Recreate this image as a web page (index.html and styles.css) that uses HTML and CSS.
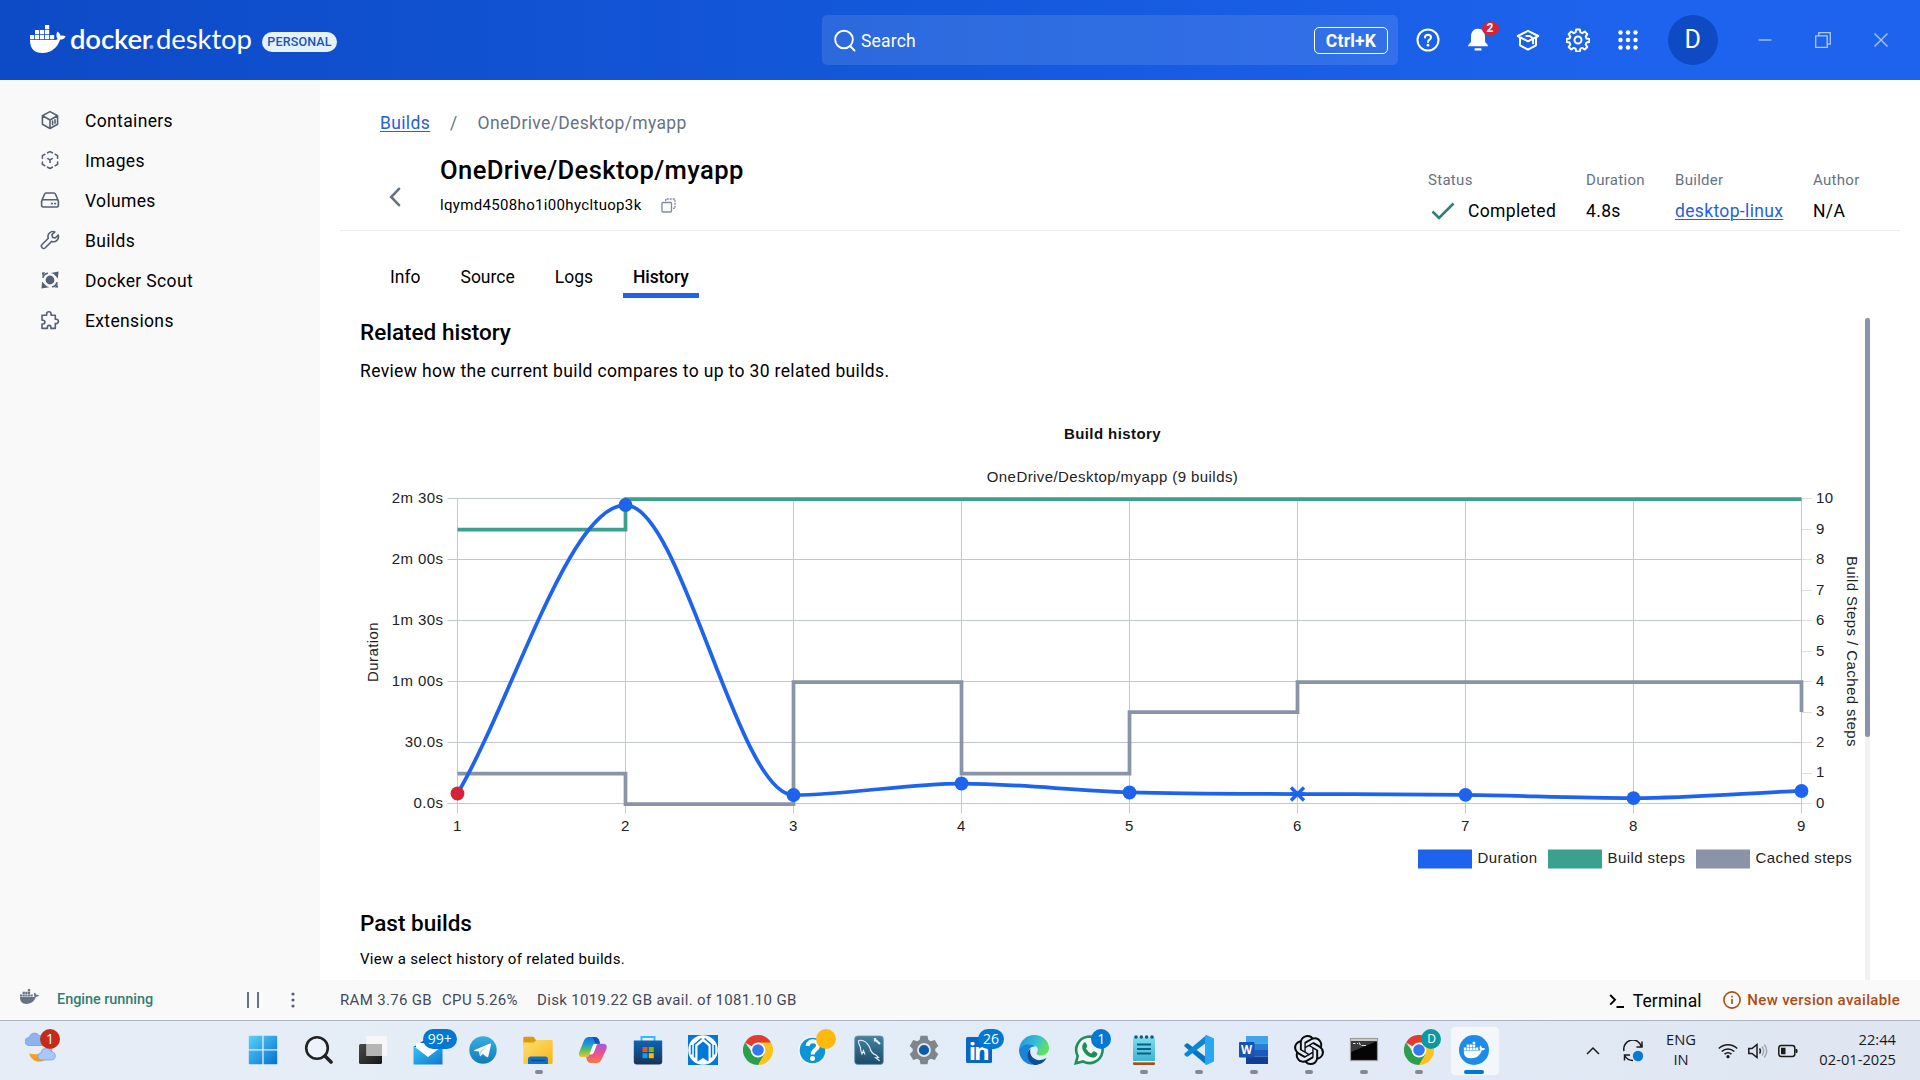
FILE: index.html
```
<!DOCTYPE html>
<html lang="en">
<head>
<meta charset="utf-8">
<title>Docker Desktop</title>
<link rel="stylesheet" href="styles.css">
</head>
<body>
<svg class="defs" width="0" height="0" aria-hidden="true">
  <defs>
    <symbol id="whale" viewBox="0 0 36 28">
      <path d="M15 0h4.200v4.200h-4.200zM5 5h4.200v4.200H5zM10 5h4.200v4.200H10zM15 5h4.200v4.200h-4.200zM0 10h4.200v4.200H0zM5 10h4.200v4.200H5zM10 10h4.200v4.200H10zM15 10h4.200v4.200h-4.200zM20 10h4.200v4.200h-4.200z"/>
      <path d="M0 15h24.300c1.400 0 2.500-.2 3.400-.7-1.600-2.300-1.700-5.300-.3-7.800 1.800 1.100 2.900 2.600 3.200 4.200 1.800-.4 3.700-.1 5.100.8-.9 2-2.800 3.100-5.500 3.100C27.300 23 21.200 28 12.500 28 4.300 28 0 23.800 0 15z"/>
    </symbol>
    <symbol id="chrome" viewBox="0 0 30 30">
      <path fill="#e33b2e" d="M15 15 2 7.500a15 15 0 0 1 26 0z"/>
      <path fill="#fcc31e" d="M28 7.500A15 15 0 0 1 15 30l0-10 5-5-5-7.500z"/>
      <path fill="#2b9f4b" d="M2 7.500A15 15 0 0 0 15 30l6.500-11.300L15 20l-6-3z"/>
      <circle cx="15" cy="15" r="7.400" fill="#fff"/><circle cx="15" cy="15" r="5.800" fill="#3478ee"/>
    </symbol>
    <linearGradient id="gWin" x1="0" y1="0" x2="1" y2="1"><stop offset="0" stop-color="#57d2fb"/><stop offset="1" stop-color="#0670cd"/></linearGradient>
    <linearGradient id="gFolder" x1="0" y1="0" x2="1" y2="1"><stop offset="0" stop-color="#ffdf72"/><stop offset="1" stop-color="#f8b619"/></linearGradient>
    <linearGradient id="gMail" x1="0" y1="0" x2="1" y2="1"><stop offset="0" stop-color="#32c6f4"/><stop offset="1" stop-color="#1376cf"/></linearGradient>
    <linearGradient id="gStore" x1="0" y1="0" x2="0" y2="1"><stop offset="0" stop-color="#0c66b4"/><stop offset="1" stop-color="#1b3257"/></linearGradient>
    <linearGradient id="gTele" x1="0" y1="0" x2="0" y2="1"><stop offset="0" stop-color="#37aee2"/><stop offset="1" stop-color="#127bb8"/></linearGradient>
    <linearGradient id="gCopA" x1="0" y1="0" x2="0" y2="1"><stop offset="0" stop-color="#1a6fe0"/><stop offset=".35" stop-color="#1b9ad8"/><stop offset=".65" stop-color="#5fbf5a"/><stop offset="1" stop-color="#f4c32a"/></linearGradient>
    <linearGradient id="gCopB" x1="0" y1="0" x2="0" y2="1"><stop offset="0" stop-color="#a35be6"/><stop offset=".5" stop-color="#ea5090"/><stop offset="1" stop-color="#fa7a3c"/></linearGradient>
    <linearGradient id="gSql" x1="0" y1="0" x2="0" y2="1"><stop offset="0" stop-color="#4482a2"/><stop offset="1" stop-color="#1d4b67"/></linearGradient>
    <linearGradient id="gEdge" x1="0" y1="0" x2="1" y2=".4"><stop offset="0" stop-color="#1593d8"/><stop offset=".6" stop-color="#35bfd8"/><stop offset="1" stop-color="#62df60"/></linearGradient>
    <linearGradient id="gNote" x1="0" y1="0" x2="0" y2="1"><stop offset="0" stop-color="#7ddcee"/><stop offset="1" stop-color="#41b4d2"/></linearGradient>
    <linearGradient id="gMoon" x1="0" y1="0" x2="1" y2="1"><stop offset="0" stop-color="#f9b62c"/><stop offset="1" stop-color="#ef8b1d"/></linearGradient>
    <linearGradient id="gDark" x1="0" y1="0" x2="1" y2="1"><stop offset="0" stop-color="#4a4a4a"/><stop offset="1" stop-color="#161616"/></linearGradient>
  </defs>
</svg>

<header class="topbar">
  <div class="brand">
    <svg class="brand-whale" width="36" height="28"><use href="#whale"/></svg>
    <svg class="brand-name" width="188" height="44" viewBox="0 0 188 44">
      <text x="0" y="31" class="brand-strong" textLength="82">docker</text>
      <circle cx="81.500" cy="29" r="2" fill="#8db0f0"/>
      <text x="86" y="31" class="brand-light" textLength="96">desktop</text>
    </svg>
    <span class="plan">PERSONAL</span>
  </div>
  <div class="search">
    <svg width="22" height="23" viewBox="0 0 22 23" fill="none" stroke="#fff" stroke-width="1.900" stroke-linecap="round"><circle cx="10" cy="10.500" r="8.800"/><path d="m16 17 4.500 4.500"/></svg>
    <span class="search-text">Search</span>
    <kbd class="shortcut">Ctrl+K</kbd>
  </div>
  <nav class="tools">
    <span class="tool"><svg width="24" height="24" viewBox="0 0 24 24" fill="none" stroke="#fff" stroke-width="2"><circle cx="12" cy="12" r="10.500"/><path d="M9 9.600C9 7.800 10.300 6.800 12 6.800s3 1 3 2.600c0 2.200-3 2.300-3 4.600" stroke-linecap="round"/><circle cx="12" cy="17.200" r="1.400" fill="#fff" stroke="none"/></svg></span>
    <span class="tool"><svg width="24" height="24" viewBox="0 0 24 24" fill="#fff"><path d="M12 .8c4.600 0 7 3.500 7 7.600v5.200c0 1.500 3 2.600 3 4.600H2c0-2 3-3.100 3-4.600V8.400C5 4.300 7.400.8 12 .8zM8.600 20.300h6.800v2.300H8.600z"/></svg><b class="tool-badge">2</b></span>
    <span class="tool"><svg width="24" height="24" viewBox="0 0 24 24" fill="none" stroke="#fff" stroke-width="2" stroke-linejoin="round"><path d="M12 2.800 22.200 8 12 13.300 1.800 8zM4 9.500v7.800l8 4.400 8-4.400V9.500M9.500 8h4.300l3.300 2.400v5.800"/></svg></span>
    <span class="tool"><svg width="24" height="24" viewBox="0 0 24 24" fill="none" stroke="#fff" stroke-width="2" stroke-linejoin="round"><circle cx="12" cy="12" r="3.500"/><path d="M10.200 1.500h3.600l.6 2.900 1.900.8 2.500-1.700 2.500 2.600-1.600 2.500.7 1.800 3 .6v3l-3 .6-.7 1.900 1.600 2.500-2.500 2.500-2.500-1.600-1.900.7-.6 2.900h-3.600l-.6-2.900-1.900-.7-2.500 1.600-2.500-2.500 1.600-2.500-.7-1.900-3-.6v-3l3-.6.7-1.800-1.600-2.500 2.500-2.600 2.500 1.700 1.900-.8z"/></svg></span>
    <span class="tool"><svg width="20" height="20" viewBox="0 0 20 20" fill="#fff"><circle cx="2.500" cy="2.500" r="2.200"/><circle cx="10" cy="2.500" r="2.200"/><circle cx="17.500" cy="2.500" r="2.200"/><circle cx="2.500" cy="10" r="2.200"/><circle cx="10" cy="10" r="2.200"/><circle cx="17.500" cy="10" r="2.200"/><circle cx="2.500" cy="17.500" r="2.200"/><circle cx="10" cy="17.500" r="2.200"/><circle cx="17.500" cy="17.500" r="2.200"/></svg></span>
  </nav>
  <span class="avatar">D</span>
  <div class="window-buttons">
    <svg width="16" height="16" viewBox="0 0 16 16"><path d="M1.500 8h13"/></svg>
    <svg width="16" height="16" viewBox="0 0 16 16"><path d="M.7 3.800h11.500v11.500H.7zM3.800 3.800V.7h11.500v11.500h-3.100"/></svg>
    <svg width="16" height="16" viewBox="0 0 16 16"><path d="m1.500 1.500 13 13m0-13-13 13"/></svg>
  </div>
</header>

<div class="workspace">
  <aside class="sidebar">
    <a class="nav-item"><svg class="nav-icon" viewBox="0 0 20 20"><path d="M10 1.600 17.600 5.700v8.600L10 18.500 2.400 14.300V5.700zM2.600 5.800 10 10l7.400-4.200M10 10v8.300M12.600 11v3.600M15 9.800v3.500"/></svg>Containers</a>
    <a class="nav-item"><svg class="nav-icon" viewBox="0 0 20 20"><path d="M7.600 2.800 10 1.600l2.400 1.200M15.200 4.300l2.400 1.300v2.600M17.600 12v2.400l-2.400 1.300M12.400 17.200 10 18.500l-2.400-1.300M4.800 15.700l-2.400-1.300V12M2.400 8.200V5.600l2.400-1.300M7.800 8.600 10 9.900l2.200-1.300M10 9.900v2.500"/></svg>Images</a>
    <a class="nav-item"><svg class="nav-icon" viewBox="0 0 20 20"><path d="M1.800 10.500 4.500 4.200Q5 3 6.200 3h7.600q1.200 0 1.700 1.200l2.700 6.300M3.300 9.800h13.400q1.700 0 1.700 1.700v3.800q0 1.700-1.700 1.700H3.300q-1.700 0-1.700-1.700v-3.800q0-1.700 1.700-1.700zM11.500 13.600h.8M14.700 13.600h.8"/></svg>Volumes</a>
    <a class="nav-item"><svg class="nav-icon" viewBox="0 0 20 20"><path d="M14.800 1.900a5 5 0 0 0-6.500 6.400L2.100 14.500a2 2 0 0 0 3.200 3.200l6.400-6.300a5 5 0 0 0 6.500-6.300l-3 2.900-2.600-.6-.7-2.600z"/></svg>Builds</a>
    <a class="nav-item"><svg class="nav-icon" viewBox="0 0 20 20"><circle cx="10" cy="10" r="3.600" fill="#566074"/><path d="M3 7.300Q3.800 4 7.300 3.200M16.900 12.700q-.8 3.300-4.200 4.100"/><path fill="#566074" stroke="none" d="m18.600 1.400-.8 7-2.200-2.500-2.300-2.200-2.500-.8zM1.400 18.600l.8-7 2.200 2.500 2.300 2.200 2.500.9zM1.800 2.600l3.500-.3-2.600 3.800zM18.200 17.400l-3.500.3 2.600-3.800z"/></svg>Docker Scout</a>
    <a class="nav-item"><svg class="nav-icon" viewBox="0 0 20 20"><path d="M6.600 5.300V4a2.200 2.200 0 0 1 4.500 0v1.300h4.200v4h.9a2.100 2.100 0 0 1 0 4.300h-.9v4.800h-4.400v-1.300a1.700 1.700 0 0 0-3.500 0v1.300H2v-4.400h1a1.900 1.900 0 0 0 0-3.800H2V5.300z"/></svg>Extensions</a>
  </aside>

  <main class="main">
    <nav class="crumbs"><a class="link">Builds</a><span class="slash">/</span><span>OneDrive/Desktop/myapp</span></nav>
    <section class="build-head">
      <svg class="back" width="14" height="20" viewBox="0 0 14 20"><path d="M11 1.800 3.200 10l7.800 8.200"/></svg>
      <div class="build-title">
        <h1>OneDrive/Desktop/myapp</h1>
        <div class="build-id"><span>lqymd4508ho1i00hycltuop3k</span><svg width="15" height="15" viewBox="0 0 15 15" fill="none" stroke="#8089a0" stroke-width="1.300"><rect x="1" y="4.500" width="9.500" height="9.500" rx="1"/><path stroke-dasharray="2 1" d="M4.700 3V1H14v9.300h-2"/></svg></div>
      </div>
      <dl class="facts">
        <div class="fact fact-status"><dt>Status</dt><dd><svg width="24" height="18" viewBox="0 0 24 18"><path d="M1.500 9.500 8 16 22.500 1.500"/></svg>Completed</dd></div>
        <div class="fact fact-duration"><dt>Duration</dt><dd>4.8s</dd></div>
        <div class="fact fact-builder"><dt>Builder</dt><dd><a class="link">desktop-linux</a></dd></div>
        <div class="fact"><dt>Author</dt><dd>N/A</dd></div>
      </dl>
    </section>
    <nav class="tabs"><a class="tab">Info</a><a class="tab">Source</a><a class="tab">Logs</a><a class="tab tab-active">History</a></nav>
    <section class="scroller">
      <div class="history">
        <h2>Related history</h2>
        <p class="lead">Review how the current build compares to up to 30 related builds.</p>
        <svg class="chart" width="1500" height="470" viewBox="360 410 1500 470">
          <text class="chart-title" x="1112.500" y="438.500" text-anchor="middle">Build history</text>
          <text x="1112.500" y="481.500" text-anchor="middle">OneDrive/Desktop/myapp (9 builds)</text>
          <path class="ticks-right" d="M1802 498.500h10M1802 529.500h10M1802 559.500h10M1802 590.500h10M1802 620.500h10M1802 651.500h10M1802 681.500h10M1802 712.500h10M1802 742.500h10M1802 773.500h10M1802 803.500h10"/>
          <path class="grid" d="M447.500 498.500h1354M447.500 559.500h1354M447.500 620.500h1354M447.500 681.500h1354M447.500 742.500h1354M447.500 803.500h1354M457.500 498.500v315M625.500 498.500v315M793.500 498.500v315M961.500 498.500v315M1129.500 498.500v315M1297.500 498.500v315M1465.500 498.500v315M1633.500 498.500v315M1801.500 498.500v315"/>
          <path class="line cached" d="M457.500 773.500h168v30.500h168V682h168v91.500h168V712h168v-30h504v30"/>
          <path class="line steps" d="M457.500 529.500h168V499h1176"/>
          <path class="line duration" d="M457.500 793.600C513.500 697.400 569.500 505 625.500 505S737.500 795 793.500 795s112-11.500 168-11.500 112 7.300 168 8.800 112 1.400 168 1.700 112 .2 168 .9 112 3.200 168 3.200 112-5 168-7.300"/>
          <circle cx="457.500" cy="793.500" r="6.900" fill="#d5233a"/>
          <g fill="#1d63ed"><circle cx="625.500" cy="505" r="6.900"/><circle cx="793.500" cy="795" r="6.900"/><circle cx="961.500" cy="783.500" r="6.900"/><circle cx="1129.500" cy="792.500" r="6.900"/><circle cx="1465.500" cy="794.800" r="6.900"/><circle cx="1633.500" cy="798.200" r="6.900"/><circle cx="1801.500" cy="791" r="6.900"/></g>
          <path class="cross" d="m1291 787.500 13 13m0-13-13 13M1290 794h15"/>
          <g text-anchor="end"><text x="443.500" y="503">2m 30s</text><text x="443.500" y="564">2m 00s</text><text x="443.500" y="625">1m 30s</text><text x="443.500" y="686">1m 00s</text><text x="443.500" y="747">30.0s</text><text x="443.500" y="808">0.0s</text></g>
          <g><text x="1816" y="503">10</text><text x="1816" y="534">9</text><text x="1816" y="564">8</text><text x="1816" y="595">7</text><text x="1816" y="625">6</text><text x="1816" y="656">5</text><text x="1816" y="686">4</text><text x="1816" y="716">3</text><text x="1816" y="747">2</text><text x="1816" y="777">1</text><text x="1816" y="808">0</text></g>
          <g text-anchor="middle"><text x="457.500" y="831">1</text><text x="625.500" y="831">2</text><text x="793.500" y="831">3</text><text x="961.500" y="831">4</text><text x="1129.500" y="831">5</text><text x="1297.500" y="831">6</text><text x="1465.500" y="831">7</text><text x="1633.500" y="831">8</text><text x="1801.500" y="831">9</text></g>
          <text transform="translate(378 682) rotate(-90)">Duration</text>
          <text transform="translate(1847 556) rotate(90)">Build Steps / Cached steps</text>
          <rect x="1418" y="849.500" width="54" height="19" fill="#1d63ed"/><text x="1477.500" y="863">Duration</text>
          <rect x="1548" y="849.500" width="54" height="19" fill="#3ba08d"/><text x="1607.500" y="863">Build steps</text>
          <rect x="1696" y="849.500" width="54" height="19" fill="#8b93a7"/><text x="1755.500" y="863">Cached steps</text>
        </svg>
        <h2>Past builds</h2>
        <p class="note">View a select history of related builds.</p>
      </div>
      <div class="scrollbar"><div class="thumb"></div></div>
    </section>
  </main>
</div>

<footer class="statusbar">
  <svg class="engine-whale" width="19" height="15"><use href="#whale"/></svg>
  <span class="engine">Engine running</span>
  <svg class="pause" width="12" height="16" viewBox="0 0 12 16"><path d="M1 0v16M11 0v16"/></svg>
  <svg class="more" width="4" height="16" viewBox="0 0 4 16" fill="#566074"><circle cx="2" cy="2" r="1.600"/><circle cx="2" cy="8" r="1.600"/><circle cx="2" cy="14" r="1.600"/></svg>
  <span class="ram">RAM 3.76 GB</span><span class="cpu">CPU 5.26%</span><span>Disk 1019.22 GB avail. of 1081.10 GB</span>
  <span class="terminal"><svg width="16" height="14" viewBox="0 0 16 14"><path d="m1.200 1 4.800 4.800-4.800 4.800M7.500 13H15"/></svg>Terminal</span>
  <span class="update"><svg width="18" height="18" viewBox="0 0 18 18"><circle cx="9" cy="9" r="8.100"/><path d="M9 8v5M9 4.700v1.800"/></svg>New version available</span>
</footer>

<div class="taskbar">
  <div class="weather">
    <svg width="32" height="36" viewBox="0 0 32 36"><path fill="url(#gMoon)" d="M28 14c1 9-9 14-24 11.500 2 6.500 8 9.500 14 7.500s10.500-9 10-19z"/><path fill="#8fb3ee" stroke="#779ce2" stroke-width=".8" d="M4 17.500a4 4 0 0 1 .3-8 5.300 5.300 0 0 1 9.700-2c4 0 5 4 5 10z"/><path fill="#a9c8f8" stroke="#779ce2" stroke-width=".8" d="M16.500 32a3.500 3.500 0 0 1-.5-7 5.200 5.200 0 0 1 10-1.500c6 .5 5.500 8.500.5 8.500z"/></svg>
    <b class="badge badge-red">1</b>
  </div>
  <div class="apps">
    <span class="app"><svg viewBox="0 0 30 30"><path fill="url(#gWin)" d="M.8 1.500q0-.7.700-.7h12.800v13.500H.8zM15.600.8h12.900q.7 0 .7.700v12.800H15.600zM.8 15.500h13.500v13.700H1.500q-.7 0-.7-.7zM15.600 15.500h13.600v13q0 .7-.7.700H15.600z"/></svg></span>
    <span class="app"><svg viewBox="0 0 30 30" fill="none" stroke="#222"><circle cx="14" cy="13" r="10.800" stroke-width="2.600" fill="#eef3fb"/><path d="m22 21 6 6" stroke-width="3.600" stroke-linecap="round"/></svg></span>
    <span class="app"><svg viewBox="0 0 30 30"><rect x="1" y="9" width="23" height="20" rx="1.500" fill="url(#gDark)"/><path fill="#f6f6f6" d="M8.500 1h20.500v20H8.500z"/><path fill="#b5b5b5" d="M8.500 9H24v12H8.500z"/></svg></span>
    <span class="app"><svg viewBox="0 0 30 30"><path fill="#0a5aa8" d="M.5 12 15 3l14.500 9z"/><path fill="#fff" d="M3 8h24v14H3z"/><path fill="url(#gMail)" d="M.5 11 15 22l14.500-11v18.500H.5z"/></svg><b class="badge badge-wide">99+</b></span>
    <span class="app"><svg viewBox="0 0 30 30"><circle cx="15" cy="15" r="13.700" fill="url(#gTele)"/><path fill="#fff" d="M6.500 15 22 8.600q1.300-.3 1 1.200L20.300 21.500q-.4 1.200-1.600.5l-4-3-2 2q-.7.500-.9-.5l-.9-4L6.600 15.900q-1-.4-.1-.9z"/><path fill="#bcd6ea" d="m11.300 16.400 8.200-5.300-6.500 6.700-.4 3z"/></svg></span>
    <span class="app app-running"><svg viewBox="0 0 30 30"><path fill="#dc9a10" d="M.3 3q0-1.200 1.200-1.200h9L13 5h15.500v6H.3z"/><path fill="url(#gFolder)" d="M.3 7.500h10.500L13.500 5h15q1.200 0 1.200 1.200v21.600q0 1.200-1.200 1.200H1.500q-1.200 0-1.200-1.200z"/><path fill="#0d72c9" d="M5 29v-4.500q0-3 3-3h14q3 0 3 3V29z"/><path fill="#0a4f94" d="M8 24.700h14v1.500H8z"/></svg></span>
    <span class="app"><svg viewBox="0 0 30 30"><path fill="#fff" d="M12 8h8l-2 14h-8z"/><path fill="url(#gCopA)" d="M6 5.500Q7.500 2 11 2h5.500q3.800 0 4.800 4l.7 2.700h-4.500q-2.300 0-3 2.300L11.500 19.500q-.8 2.500-3.500 2.500H4.500Q-.2 22 1.300 17z"/><path fill="#1550bd" d="M13 2h3.500q3.800 0 4.800 4l.7 2.700h-4.500q-2.500-6.700-4.500-6.700z"/><path fill="url(#gCopB)" d="M23.500 24.500Q22 28 18.500 28H13q-3.300 0-4.200-3.500L8.200 22q2.500 0 3.300-2.500h1.500q2.300 0 3-2.300L18.700 10q.7-1.300 2.800-1.300H24.500q5.500 0 4 5.300z"/></svg></span>
    <span class="app"><svg viewBox="0 0 30 30"><path fill="none" stroke="#35bdf2" stroke-width="2" d="M8.500 6V2h13v4"/><path fill="url(#gStore)" d="M.8 5.500h28.400v21q0 3-3 3H3.800q-3 0-3-3z"/><path fill="#f25022" d="M9.500 12h5v5h-5z"/><path fill="#7fba00" d="M15.800 12h5v5h-5z"/><path fill="#00a4ef" d="M9.500 18.200h5v5h-5z"/><path fill="#ffb900" d="M15.800 18.200h5v5h-5z"/></svg></span>
    <span class="app"><svg viewBox="0 0 30 30"><path fill="#0078d7" d="M0 0h30v30H0z"/><circle cx="15" cy="15" r="14.800" fill="#fff"/><path fill="#0078d7" d="M9.500 11 15 6.500 20.500 11v15.500L15 23l-5.500 3.500z"/><path fill="none" stroke="#0078d7" stroke-width="1.500" d="M6.500 22.500V9.500L13.500 3.500M23.500 22.500V9.500L16.500 3.500M3.500 19.500V10M26.500 19.500V10"/></svg></span>
    <span class="app"><svg><use href="#chrome"/></svg></span>
    <span class="app"><svg viewBox="0 0 30 30"><circle cx="14.500" cy="15.500" r="14.300" fill="#f4f8fc"/><circle cx="14.500" cy="15.500" r="12.800" fill="#0a95d6"/><path fill="none" stroke="#fff" stroke-width="4" d="M9.500 11c.8-6.500 11-6 10.500 0-.3 4-5.300 3.500-5.300 8.500"/><circle cx="14.500" cy="23.500" r="2.500" fill="#fff"/></svg><b class="badge badge-yellow"></b></span>
    <span class="app"><svg viewBox="0 0 30 30"><rect x=".7" y="1" width="28.600" height="28.400" rx="3" fill="url(#gSql)" stroke="#6c93aa" stroke-width=".8"/><path fill="none" stroke="#e8f0f5" stroke-width="1.100" d="M11 19.500 9.500 15.500 8 19q-1.500-3-1.500-6.500Q4 7.500 4.800 5.500 11 4 15.500 12q2 7 6.500 8l2.500 2.500-3 .2 4.200 3"/><path stroke="#e8f0f5" stroke-width="2.200" d="m21 4.500 5 4.500M21 3v3.500"/></svg></span>
    <span class="app"><svg viewBox="0 0 30 30"><path fill="#7e858b" d="M11.500.8h7l.8 4 2.300 1.400 4.200-1.200 3.500 6-3 2.700v2.600l3 2.700-3.500 6-4.200-1.200-2.300 1.400-.8 4h-7l-.8-4-2.300-1.400L4.200 25 .7 19l3-2.700v-2.600L.7 11l3.500-6 4.200 1.200 2.300-1.400z"/><circle cx="15" cy="15" r="6" fill="#0b5cab" stroke="#e4e8ec" stroke-width="1.800"/></svg></span>
    <span class="app"><svg viewBox="0 0 30 30"><rect x="2" y="2" width="26" height="26" rx="1.500" fill="#0a66c2"/><text class="glyph-in" x="4.800" y="24.500" textLength="21">in</text></svg><b class="badge badge-two">26</b></span>
    <span class="app"><svg viewBox="0 0 30 30"><path fill="url(#gEdge)" d="M0 14C1.500 5 8 0 15 0c9 0 15 6 15 13 0 5-4 7.500-8 7.500-3.500 0-5-1.500-4-3 2.500-4-1-8-6-8C6 9.500 1.500 12 0 14z"/><path fill="#1784d8" d="M0 14.500C1.500 11 6.500 9 11.500 9.300c2 .1 4 1 5 2.200C11 11 8 15.500 10 21c1.500 4.500 6 7.500 10 8C9 32.500 0 25 0 14.500z"/><path fill="#104d92" d="M11.500 13.500C9.500 21 16 26 22 25q3-.5 5.500-2C25 28 20 30 15.500 30 8 27 6.500 17.500 11.500 13.500z"/></svg></span>
    <span class="app"><svg viewBox="0 0 30 30"><path fill="#f1f7f6" stroke="#1d8f57" stroke-width="2.600" d="M1.800 28.200 3.700 21A13.200 13.200 0 1 1 9 26.400z"/><path fill="#1d8f57" d="M9.500 8q1.700-1.500 2.600.3l1.200 2.700q.2.900-1.400 2.600 2 3.700 5.400 4.800l1.900-2q.6-.4 3.600 1.300 1.300.8.300 2.600-1.700 3-5.100 2.300-7-1.500-9.600-8.500Q7.800 10.200 9.500 8z"/></svg><b class="badge badge-one">1</b></span>
    <span class="app app-running"><svg viewBox="0 0 30 30"><path fill="url(#gNote)" d="M4 2.500h22V26H4z"/><path fill="#a4501c" d="M4 27h22v2q0 1-1 1H5q-1 0-1-1z"/><path fill="#fff" d="M4 26h22v1.300H4z"/><path stroke="#0a5f85" stroke-width="2" d="M8 9.500h14M8 14h14M8 18.500h14"/><g fill="#0b5b7d"><circle cx="7" cy="2" r="1.800"/><circle cx="12.300" cy="2" r="1.800"/><circle cx="17.600" cy="2" r="1.800"/><circle cx="23" cy="2" r="1.800"/></g></svg></span>
    <span class="app app-running"><svg viewBox="0 0 30 30"><path fill="#0a75bf" d="m.4 10 2-1.600q.8-.4 1.600.1L22.500 22.500V30L.5 11.500z"/><path fill="#0e86d3" d="m.4 20 2 1.600q.8.400 1.600-.1L22.500 7.500V0L.5 18.500z"/><path fill="#29a7f1" d="M22.500 0 30 3.500v23L22.500 30q-1.500-.2-1.500-1.500v-27Q21 .2 22.500 0z"/></svg></span>
    <span class="app app-running"><svg viewBox="0 0 30 30"><path fill="#41a5ee" d="M7 1h22v7.500H7z"/><path fill="#2b7cd3" d="M7 8.500h22v6.500H7z"/><path fill="#185abd" d="M7 15h22v6.500H7z"/><path fill="#103f91" d="M7 21.500h22V29H7z"/><rect x="0" y="7" width="15.500" height="15.500" rx="1" fill="#1a52b4"/><text class="glyph-w" x="2" y="19">W</text></svg></span>
    <span class="app app-running"><svg viewBox="0 0 24 24"><path fill="#0b0b0b" d="M22.2819 9.8211a5.9847 5.9847 0 0 0-.5157-4.9108 6.0462 6.0462 0 0 0-6.5098-2.9A6.0651 6.0651 0 0 0 4.9807 4.1818a5.9847 5.9847 0 0 0-3.9977 2.9 6.0462 6.0462 0 0 0 .7427 7.0966 5.98 5.98 0 0 0 .511 4.9107 6.051 6.051 0 0 0 6.5146 2.9001A5.9847 5.9847 0 0 0 13.2599 24a6.0557 6.0557 0 0 0 5.7718-4.2058 5.9894 5.9894 0 0 0 3.9977-2.9001 6.0557 6.0557 0 0 0-.7475-7.0729zm-9.022 12.6081a4.4755 4.4755 0 0 1-2.8764-1.0408l.1419-.0804 4.7783-2.7582a.7948.7948 0 0 0 .3927-.6813v-6.7369l2.02 1.1686a.071.071 0 0 1 .038.052v5.5826a4.504 4.504 0 0 1-4.4945 4.4944zm-9.6607-4.1254a4.4708 4.4708 0 0 1-.5346-3.0137l.142.0852 4.783 2.7582a.7712.7712 0 0 0 .7806 0l5.8428-3.3685v2.3324a.0804.0804 0 0 1-.0332.0615L9.74 19.9502a4.4992 4.4992 0 0 1-6.1408-1.6464zM2.3408 7.8956a4.485 4.485 0 0 1 2.3655-1.9728V11.6a.7664.7664 0 0 0 .3879.6765l5.8144 3.3543-2.0201 1.1685a.0757.0757 0 0 1-.071 0l-4.8303-2.7865A4.504 4.504 0 0 1 2.3408 7.872zm16.5963 3.8558L13.1038 8.364 15.1192 7.2a.0757.0757 0 0 1 .071 0l4.8303 2.7913a4.4944 4.4944 0 0 1-.6765 8.1042v-5.6772a.79.79 0 0 0-.407-.667zm2.0107-3.0231l-.142-.0852-4.7735-2.7818a.7759.7759 0 0 0-.7854 0L9.409 9.2297V6.8974a.0662.0662 0 0 1 .0284-.0615l4.8303-2.7866a4.4992 4.4992 0 0 1 6.6802 4.66zM8.3065 12.863l-2.02-1.1638a.0804.0804 0 0 1-.038-.0567V6.0742a4.4992 4.4992 0 0 1 7.3757-3.4537l-.142.0805L8.704 5.459a.7948.7948 0 0 0-.3927.6813zm1.0976-2.3654l2.602-1.4998 2.6069 1.4998v2.9994l-2.5974 1.4997-2.6067-1.4997Z"/></svg></span>
    <span class="app app-running"><svg viewBox="0 0 30 30"><rect x="1.500" y="3.500" width="27" height="22" fill="#050505" stroke="#9b9b9b" stroke-width="1.200"/><path fill="#c9c9c9" d="M2 4h26v2.300H2z"/><path fill="#3a3a3a" d="M2 6.300h26L2 17z"/><path stroke="#ddd" stroke-width="1.200" d="M4 8.500h2.500M8 8.500h1M10 7.500l1.500 2.500M12.500 10.500H17"/></svg></span>
    <span class="app app-running"><svg><use href="#chrome"/></svg><b class="badge badge-profile">D</b></span>
    <span class="app app-active"><svg viewBox="0 0 30 30"><circle cx="15" cy="15" r="15" fill="#1d8bea"/><svg x="4.500" y="6.500" width="22" height="17" viewBox="0 0 36 28" fill="#fff"><use href="#whale"/></svg></svg></span>
  </div>
  <div class="tray">
    <svg class="tray-chevron" width="14" height="9" viewBox="0 0 14 9"><path d="m1 8 6-6 6 6"/></svg>
    <svg class="tray-sync" width="22" height="22" viewBox="0 0 22 22"><path d="M2 11A8.800 8.800 0 0 1 19.500 7M20 1.500V7h-5.500M11 20.500A9 9 0 0 1 3 16M8 15H2.500v5.500"/><circle cx="16" cy="16" r="5.200" fill="#0a78d6" stroke="none"/></svg>
    <div class="lang"><span>ENG</span><span>IN</span></div>
    <div class="tray-group">
      <svg width="20" height="16" viewBox="0 0 20 16"><path d="M.8 5.500a13 13 0 0 1 18.400 0M3.700 8.500a9 9 0 0 1 12.600 0M6.500 11.300a5 5 0 0 1 7 0"/><circle cx="10" cy="13.700" r="1.600" fill="#1a1a1a" stroke="none"/></svg>
      <svg width="20" height="16" viewBox="0 0 20 16"><path d="M.8 5.500H4l5-4v13l-5-4H.8zM11.500 5.500q1.800 2.500 0 5"/><path opacity=".3" d="M14 3.500q3.300 4.500 0 9M16.300 1.500q4.800 6.500 0 13"/></svg>
      <svg width="20" height="14" viewBox="0 0 20 14"><rect x=".8" y="1.500" width="16" height="11" rx="2.500"/><path fill="#1a1a1a" stroke="none" d="M3 3.700h4.500v6.600H3zM17.500 5h1q1 0 1 1v2q0 1-1 1h-1z"/></svg>
    </div>
    <div class="clock"><span>22:44</span><span>02-01-2025</span></div>
  </div>
</div>
</body>
</html>
```
FILE: styles.css
```
* { box-sizing: border-box; }

body {
  margin: 0;
  width: 1920px;
  height: 1080px;
  overflow: hidden;
  display: flex;
  flex-direction: column;
  background: #fff;
  color: #000;
  font: 17.5px/24px Roboto, sans-serif;
  letter-spacing: 0.35px;
}

svg { flex: none; display: block; }
.defs { position: absolute; }
h1, h2, p, dl, dd { margin: 0; }

/* Top bar */
.topbar {
  height: 80px;
  display: flex;
  align-items: center;
  color: #fff;
  background: linear-gradient(90deg, #0d4ac6 0%, #1459dc 50%, #1d63ed 85%);
}
.brand { display: flex; align-items: center; width: 822px; padding-left: 30px; }
.brand-whale { fill: #fff; margin-top: -2px; }
.brand-name { margin-left: 4px; fill: #fff; overflow: visible; }
.brand-strong, .brand-light { font-family: Lato, sans-serif; font-size: 27.5px; letter-spacing: 0; }
.brand-strong { font-weight: 600; }
.brand-light { font-weight: 400; }
.plan {
  margin-left: 4px;
  margin-top: 4px;
  width: 75px;
  height: 20px;
  border-radius: 10px;
  background: #e5f2fc;
  color: #1553c4;
  font-size: 12.5px;
  font-weight: 500;
  line-height: 20px;
  letter-spacing: 0.16px;
  text-align: center;
}
.search {
  display: flex;
  align-items: center;
  width: 576px;
  height: 50px;
  padding: 0 10px 0 12px;
  border-radius: 5px;
  background: rgba(255, 255, 255, 0.11);
}
.search-text { margin-left: 5px; flex: 1; padding-top: 1px; letter-spacing: 0.2px; }
.shortcut {
  width: 74px;
  height: 27px;
  border: 1px solid #fff;
  border-radius: 5px;
  font: 700 17.5px/26px Roboto, sans-serif;
  letter-spacing: 0.2px;
  text-align: center;
}
.tools { display: flex; margin-left: 4.5px; }
.tool { position: relative; width: 50px; display: flex; justify-content: center; }
.tool:last-child { padding-top: 2px; }
.tool-badge {
  position: absolute;
  left: 29px;
  top: -6px;
  width: 17px;
  height: 13px;
  border-radius: 7px;
  background: #d5233a;
  font: 700 12px/13px Roboto, sans-serif;
  text-align: center;
}
.avatar {
  width: 50px;
  height: 50px;
  margin-left: 15.5px;
  border-radius: 50%;
  background: #0d4ac4;
  font-size: 25px;
  line-height: 50px;
  text-align: center;
}
.window-buttons { display: flex; gap: 42px; margin-left: 39px; }
.window-buttons svg { fill: none; stroke: rgba(255, 255, 255, 0.65); stroke-width: 1.3; }

/* Body */
.workspace { height: 900px; display: flex; }
.sidebar { width: 320px; padding-top: 20px; background: #f9f9fa; }
.nav-item { display: flex; align-items: center; height: 40px; padding: 1px 0 0 40px; gap: 25px; }
.nav-icon { width: 20px; height: 20px; margin-top: -1px; fill: none; stroke: #566074; stroke-width: 1.6; stroke-linejoin: round; stroke-linecap: round; }
.main { width: 1600px; padding: 31px 20px 0; display: flex; flex-direction: column; }
.link { color: #2560e0; text-decoration: underline; text-underline-offset: 2px; text-decoration-thickness: 1px; }
.crumbs { display: flex; padding-left: 40px; color: #677285; }
.slash { width: 47.5px; padding-left: 20px; }
.build-head { display: flex; height: 96px; padding-top: 20px; border-bottom: 1px solid #ececef; }
.back { margin: 32px 0 0 48px; fill: none; stroke: #677285; stroke-width: 2.6; stroke-linecap: round; }
.build-title { margin-left: 38px; flex: 1; }
h1 { font-size: 25.6px; font-weight: 500; line-height: 30px; letter-spacing: 0.38px; }
.build-id { display: flex; align-items: center; gap: 19px; margin-top: 10px; font-size: 15px; line-height: 20px; letter-spacing: 0.33px; }
.facts { display: flex; padding-top: 15px; }
.fact dt { color: #677285; font-size: 15px; line-height: 20px; letter-spacing: 0.3px; }
.fact dd { display: flex; align-items: center; height: 24px; margin-top: 9px; }
.fact svg { margin: 0 13px 0 3px; fill: none; stroke: #2e7f74; stroke-width: 2.6; }
.fact-status { width: 158px; }
.fact-duration { width: 89px; }
.fact-builder { width: 138px; }
.fact:last-child { width: 87px; }
.tabs { display: flex; gap: 20px; padding: 26px 0 0 40px; letter-spacing: 0; }
.tab { padding: 8px 10px 4px; border-bottom: 5px solid transparent; }
.tab-active { border-color: #1d63ed; font-weight: 500; letter-spacing: -0.1px; }
.scroller { display: flex; margin-top: 20px; height: 662px; overflow: hidden; }
.history { width: 1525px; padding-left: 20px; }
h2 { font-size: 22.5px; font-weight: 500; line-height: 28px; letter-spacing: 0; }
.lead { margin-top: 13px; }
.note { margin-top: 12px; font-size: 15px; line-height: 20px; letter-spacing: 0.32px; }
.scrollbar { width: 5px; background: #f1f1f2; }
.thumb { width: 5px; height: 419px; border-radius: 2.5px; background: #8b93a7; }

/* Chart */
.chart { margin: 27px 0 29px; fill: #222; font: 15px "Liberation Sans", Arial, sans-serif; letter-spacing: 0.42px; }
.chart-title { font-weight: 700; font-size: 15px; fill: #111; }
.grid { fill: none; stroke: #c3c7d2; stroke-width: 1; }
.ticks-right { stroke: #dfdfe2; }
.line { fill: none; stroke-width: 3.75; }
.cached { stroke: #8b93a7; }
.steps { stroke: #3ba08d; }
.duration { stroke: #1d63ed; }
.cross { stroke: #1d63ed; stroke-width: 3.5; }

/* Status bar */
.statusbar {
  display: flex;
  align-items: center;
  height: 41px;
  padding-left: 20px;
  border-bottom: 1px solid #adb3bf;
  background: #f9f9fa;
  color: #41495a;
  font-size: 15px;
  letter-spacing: 0.33px;
}
.engine-whale { fill: #677285; margin-top: -7px; }
.engine { width: 190px; margin-left: 18px; color: #2e7f74; font-size: 14.4px; font-weight: 500; letter-spacing: 0; }
.pause { fill: none; stroke: #677285; stroke-width: 2; }
.more { margin: 0 45px 0 32px; }
.ram { width: 102px; }
.cpu { width: 95px; }
.terminal { display: flex; align-items: center; gap: 8px; margin-left: auto; padding-top: 1px; color: #000; font-size: 17.5px; letter-spacing: 0.16px; }
.terminal svg { fill: none; stroke: #000; stroke-width: 1.9; }
.update { display: flex; align-items: center; gap: 6px; margin: 0 20px 0 21.5px; color: #b24a10; font-weight: 500; letter-spacing: 0.33px; }
.update svg { fill: none; stroke: #b24a10; stroke-width: 1.6; }

/* Taskbar */
.taskbar {
  display: flex;
  height: 59px;
  background: linear-gradient(90deg, #e6edf6 0%, #e2ecf8 55%, #dfe6f2 100%);
  color: #1a1a1a;
  font: 14.7px/20px "Open Sans", sans-serif;
  letter-spacing: 0;
}
.weather { position: relative; width: 235.5px; padding: 7px 0 0 25px; }
.apps { display: flex; }
.app { position: relative; width: 55.06px; padding: 14px 12.5px 0; }
.app > svg { width: 30px; height: 30px; }
.app-running::after, .app-active::after {
  content: "";
  position: absolute;
  left: 24px;
  top: 49px;
  width: 8px;
  height: 4px;
  border-radius: 2px;
  background: #85898e;
}
.app-active::after { left: 17.5px; width: 20px; background: #0078d4; }
.app-active::before {
  content: "";
  position: absolute;
  left: 3.5px;
  top: 5px;
  width: 48px;
  height: 48px;
  border-radius: 5px;
  background: #f3f6fb;
  border: 1px solid #e6ebf2;
}
.app-active > svg { position: relative; }
.glyph-in { fill: #fff; font: 700 24px "Open Sans", sans-serif; }
.glyph-w { fill: #fff; font: 700 11.5px "Open Sans", sans-serif; }
.badge {
  position: absolute;
  top: 8px;
  height: 20px;
  min-width: 20px;
  border-radius: 10px;
  background: #0078d4;
  color: #fff;
  font: 400 14px/20px "Open Sans", sans-serif;
  text-align: center;
}
.badge-red { left: 40px; background: #c42b1c; }
.badge-wide { left: 22px; width: 34px; }
.badge-yellow { left: 30px; background: #ffb90c; }
.badge-two { left: 27px; width: 26px; }
.badge-one { left: 30px; }
.badge-profile { left: 30px; background: #0c98a2; font-size: 12px; }
.tray { display: flex; align-items: center; margin-left: auto; padding-right: 24px; }
.tray svg { fill: none; stroke: #1a1a1a; stroke-width: 1.5; }
.tray-sync { margin-left: 22px; }
.lang, .clock { display: flex; flex-direction: column; margin-top: -3px; }
.lang { width: 40px; margin-left: 17px; text-align: center; }
.tray-group { display: flex; align-items: center; gap: 10px; margin-left: 17px; }
.clock { width: 98px; text-align: right; }
```
